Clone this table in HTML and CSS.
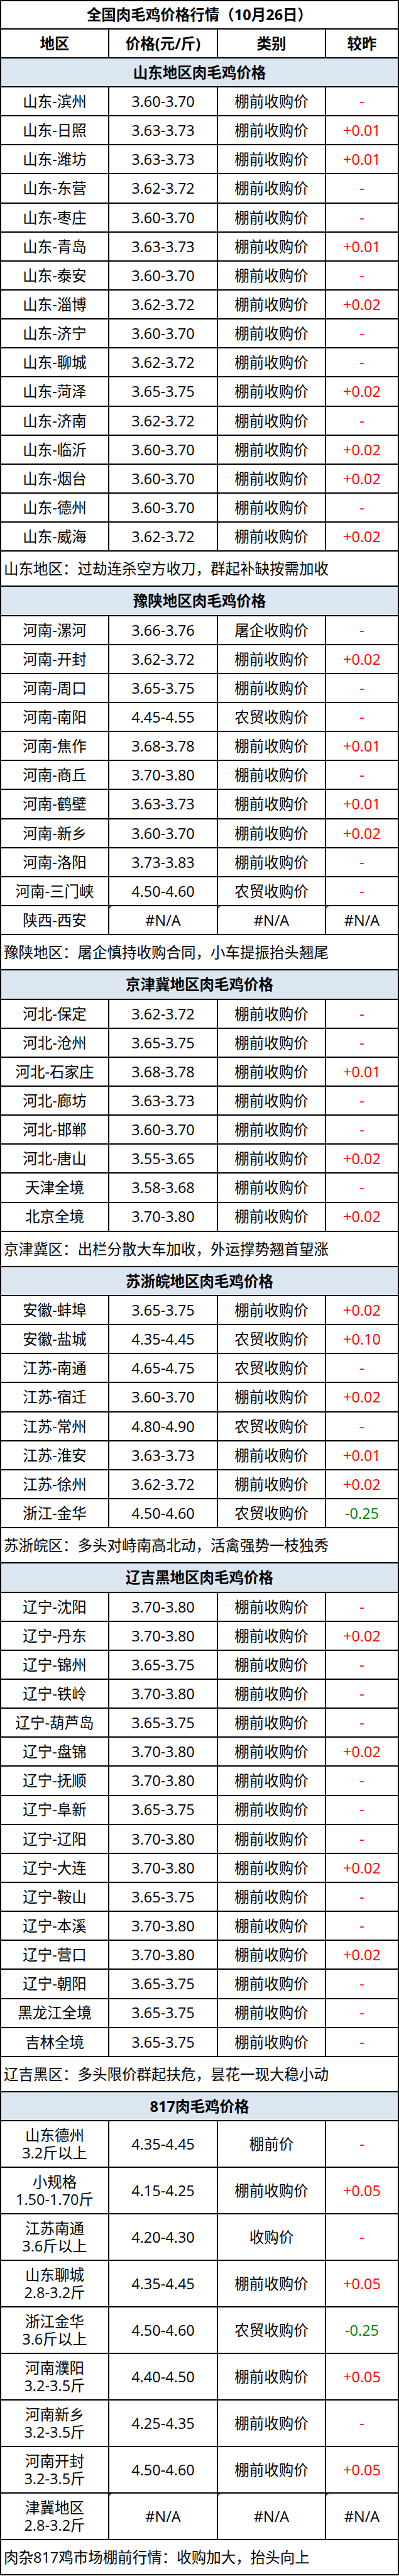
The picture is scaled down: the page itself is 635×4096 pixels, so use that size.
FILE: index.html
```html
<!DOCTYPE html>
<html lang="zh-CN">
<head>
<meta charset="utf-8">
<title>全国肉毛鸡价格行情</title>
<link rel="stylesheet" href="styles.css">
</head>
<body>
<table class="sheet">
  <colgroup>
    <col class="c1"><col class="c2"><col class="c3"><col class="c4">
  </colgroup>
  <tbody>
    <tr class="title"><td colspan="4">全国肉毛鸡价格行情（10月26日）</td></tr>
    <tr class="head"><td>地区</td><td>价格(元/斤)</td><td>类别</td><td>较昨</td></tr>

    <tr class="section"><td colspan="4">山东地区肉毛鸡价格</td></tr>
    <tr class="row"><td>山东-滨州</td><td>3.60-3.70</td><td>棚前收购价</td><td class="up">-</td></tr>
    <tr class="row"><td>山东-日照</td><td>3.63-3.73</td><td>棚前收购价</td><td class="up">+0.01</td></tr>
    <tr class="row"><td>山东-潍坊</td><td>3.63-3.73</td><td>棚前收购价</td><td class="up">+0.01</td></tr>
    <tr class="row"><td>山东-东营</td><td>3.62-3.72</td><td>棚前收购价</td><td class="up">-</td></tr>
    <tr class="row"><td>山东-枣庄</td><td>3.60-3.70</td><td>棚前收购价</td><td class="up">-</td></tr>
    <tr class="row"><td>山东-青岛</td><td>3.63-3.73</td><td>棚前收购价</td><td class="up">+0.01</td></tr>
    <tr class="row"><td>山东-泰安</td><td>3.60-3.70</td><td>棚前收购价</td><td class="up">-</td></tr>
    <tr class="row"><td>山东-淄博</td><td>3.62-3.72</td><td>棚前收购价</td><td class="up">+0.02</td></tr>
    <tr class="row"><td>山东-济宁</td><td>3.60-3.70</td><td>棚前收购价</td><td class="up">-</td></tr>
    <tr class="row"><td>山东-聊城</td><td>3.62-3.72</td><td>棚前收购价</td><td class="up">-</td></tr>
    <tr class="row"><td>山东-菏泽</td><td>3.65-3.75</td><td>棚前收购价</td><td class="up">+0.02</td></tr>
    <tr class="row"><td>山东-济南</td><td>3.62-3.72</td><td>棚前收购价</td><td class="up">-</td></tr>
    <tr class="row"><td>山东-临沂</td><td>3.60-3.70</td><td>棚前收购价</td><td class="up">+0.02</td></tr>
    <tr class="row"><td>山东-烟台</td><td>3.60-3.70</td><td>棚前收购价</td><td class="up">+0.02</td></tr>
    <tr class="row"><td>山东-德州</td><td>3.60-3.70</td><td>棚前收购价</td><td class="up">-</td></tr>
    <tr class="row"><td>山东-威海</td><td>3.62-3.72</td><td>棚前收购价</td><td class="up">+0.02</td></tr>
    <tr class="note"><td colspan="4">山东地区：过劫连杀空方收刀，群起补缺按需加收</td></tr>

    <tr class="section"><td colspan="4">豫陕地区肉毛鸡价格</td></tr>
    <tr class="row"><td>河南-漯河</td><td>3.66-3.76</td><td>屠企收购价</td><td class="up">-</td></tr>
    <tr class="row"><td>河南-开封</td><td>3.62-3.72</td><td>棚前收购价</td><td class="up">+0.02</td></tr>
    <tr class="row"><td>河南-周口</td><td>3.65-3.75</td><td>棚前收购价</td><td class="up">-</td></tr>
    <tr class="row"><td>河南-南阳</td><td>4.45-4.55</td><td>农贸收购价</td><td class="up">-</td></tr>
    <tr class="row"><td>河南-焦作</td><td>3.68-3.78</td><td>棚前收购价</td><td class="up">+0.01</td></tr>
    <tr class="row"><td>河南-商丘</td><td>3.70-3.80</td><td>棚前收购价</td><td class="up">-</td></tr>
    <tr class="row"><td>河南-鹤壁</td><td>3.63-3.73</td><td>棚前收购价</td><td class="up">+0.01</td></tr>
    <tr class="row"><td>河南-新乡</td><td>3.60-3.70</td><td>棚前收购价</td><td class="up">+0.02</td></tr>
    <tr class="row"><td>河南-洛阳</td><td>3.73-3.83</td><td>棚前收购价</td><td class="up">-</td></tr>
    <tr class="row"><td>河南-三门峡</td><td>4.50-4.60</td><td>农贸收购价</td><td class="up">-</td></tr>
    <tr class="row"><td>陕西-西安</td><td class="err">#N/A</td><td class="err">#N/A</td><td class="err">#N/A</td></tr>
    <tr class="note"><td colspan="4">豫陕地区：屠企慎持收购合同，小车提振抬头翘尾</td></tr>

    <tr class="section"><td colspan="4">京津冀地区肉毛鸡价格</td></tr>
    <tr class="row"><td>河北-保定</td><td>3.62-3.72</td><td>棚前收购价</td><td class="up">-</td></tr>
    <tr class="row"><td>河北-沧州</td><td>3.65-3.75</td><td>棚前收购价</td><td class="up">-</td></tr>
    <tr class="row"><td>河北-石家庄</td><td>3.68-3.78</td><td>棚前收购价</td><td class="up">+0.01</td></tr>
    <tr class="row"><td>河北-廊坊</td><td>3.63-3.73</td><td>棚前收购价</td><td class="up">-</td></tr>
    <tr class="row"><td>河北-邯郸</td><td>3.60-3.70</td><td>棚前收购价</td><td class="up">-</td></tr>
    <tr class="row"><td>河北-唐山</td><td>3.55-3.65</td><td>棚前收购价</td><td class="up">+0.02</td></tr>
    <tr class="row"><td>天津全境</td><td>3.58-3.68</td><td>棚前收购价</td><td class="up">-</td></tr>
    <tr class="row"><td>北京全境</td><td>3.70-3.80</td><td>棚前收购价</td><td class="up">+0.02</td></tr>
    <tr class="note"><td colspan="4">京津冀区：出栏分散大车加收，外运撑势翘首望涨</td></tr>

    <tr class="section"><td colspan="4">苏浙皖地区肉毛鸡价格</td></tr>
    <tr class="row"><td>安徽-蚌埠</td><td>3.65-3.75</td><td>棚前收购价</td><td class="up">+0.02</td></tr>
    <tr class="row"><td>安徽-盐城</td><td>4.35-4.45</td><td>农贸收购价</td><td class="up">+0.10</td></tr>
    <tr class="row"><td>江苏-南通</td><td>4.65-4.75</td><td>农贸收购价</td><td class="up">-</td></tr>
    <tr class="row"><td>江苏-宿迁</td><td>3.60-3.70</td><td>棚前收购价</td><td class="up">+0.02</td></tr>
    <tr class="row"><td>江苏-常州</td><td>4.80-4.90</td><td>农贸收购价</td><td class="up">-</td></tr>
    <tr class="row"><td>江苏-淮安</td><td>3.63-3.73</td><td>棚前收购价</td><td class="up">+0.01</td></tr>
    <tr class="row"><td>江苏-徐州</td><td>3.62-3.72</td><td>棚前收购价</td><td class="up">+0.02</td></tr>
    <tr class="row"><td>浙江-金华</td><td>4.50-4.60</td><td>农贸收购价</td><td class="down">-0.25</td></tr>
    <tr class="note"><td colspan="4">苏浙皖区：多头对峙南高北动，活禽强势一枝独秀</td></tr>

    <tr class="section"><td colspan="4">辽吉黑地区肉毛鸡价格</td></tr>
    <tr class="row"><td>辽宁-沈阳</td><td>3.70-3.80</td><td>棚前收购价</td><td class="up">-</td></tr>
    <tr class="row"><td>辽宁-丹东</td><td>3.70-3.80</td><td>棚前收购价</td><td class="up">+0.02</td></tr>
    <tr class="row"><td>辽宁-锦州</td><td>3.65-3.75</td><td>棚前收购价</td><td class="up">-</td></tr>
    <tr class="row"><td>辽宁-铁岭</td><td>3.70-3.80</td><td>棚前收购价</td><td class="up">-</td></tr>
    <tr class="row"><td>辽宁-葫芦岛</td><td>3.65-3.75</td><td>棚前收购价</td><td class="up">-</td></tr>
    <tr class="row"><td>辽宁-盘锦</td><td>3.70-3.80</td><td>棚前收购价</td><td class="up">+0.02</td></tr>
    <tr class="row"><td>辽宁-抚顺</td><td>3.70-3.80</td><td>棚前收购价</td><td class="up">-</td></tr>
    <tr class="row"><td>辽宁-阜新</td><td>3.65-3.75</td><td>棚前收购价</td><td class="up">-</td></tr>
    <tr class="row"><td>辽宁-辽阳</td><td>3.70-3.80</td><td>棚前收购价</td><td class="up">-</td></tr>
    <tr class="row"><td>辽宁-大连</td><td>3.70-3.80</td><td>棚前收购价</td><td class="up">+0.02</td></tr>
    <tr class="row"><td>辽宁-鞍山</td><td>3.65-3.75</td><td>棚前收购价</td><td class="up">-</td></tr>
    <tr class="row"><td>辽宁-本溪</td><td>3.70-3.80</td><td>棚前收购价</td><td class="up">-</td></tr>
    <tr class="row"><td>辽宁-营口</td><td>3.70-3.80</td><td>棚前收购价</td><td class="up">+0.02</td></tr>
    <tr class="row"><td>辽宁-朝阳</td><td>3.65-3.75</td><td>棚前收购价</td><td class="up">-</td></tr>
    <tr class="row"><td>黑龙江全境</td><td>3.65-3.75</td><td>棚前收购价</td><td class="up">-</td></tr>
    <tr class="row"><td>吉林全境</td><td>3.65-3.75</td><td>棚前收购价</td><td class="up">-</td></tr>
    <tr class="note"><td colspan="4">辽吉黑区：多头限价群起扶危，昙花一现大稳小动</td></tr>

    <tr class="section"><td colspan="4">817肉毛鸡价格</td></tr>
    <tr class="tall"><td class="two">山东德州<br>3.2斤以上</td><td>4.35-4.45</td><td>棚前价</td><td class="up">-</td></tr>
    <tr class="tall"><td class="two">小规格<br>1.50-1.70斤</td><td>4.15-4.25</td><td>棚前收购价</td><td class="up">+0.05</td></tr>
    <tr class="tall"><td class="two">江苏南通<br>3.6斤以上</td><td>4.20-4.30</td><td>收购价</td><td class="up">-</td></tr>
    <tr class="tall"><td class="two">山东聊城<br>2.8-3.2斤</td><td>4.35-4.45</td><td>棚前收购价</td><td class="up">+0.05</td></tr>
    <tr class="tall"><td class="two">浙江金华<br>3.6斤以上</td><td>4.50-4.60</td><td>农贸收购价</td><td class="down">-0.25</td></tr>
    <tr class="tall"><td class="two">河南濮阳<br>3.2-3.5斤</td><td>4.40-4.50</td><td>棚前收购价</td><td class="up">+0.05</td></tr>
    <tr class="tall"><td class="two">河南新乡<br>3.2-3.5斤</td><td>4.25-4.35</td><td>棚前收购价</td><td class="up">-</td></tr>
    <tr class="tall"><td class="two">河南开封<br>3.2-3.5斤</td><td>4.50-4.60</td><td>棚前收购价</td><td class="up">+0.05</td></tr>
    <tr class="tall"><td class="two">津冀地区<br>2.8-3.2斤</td><td class="err">#N/A</td><td class="err">#N/A</td><td class="err">#N/A</td></tr>
    <tr class="note"><td colspan="4">肉杂817鸡市场棚前行情：收购加大，抬头向上</td></tr>
  </tbody>
</table>
</body>
</html>
```

FILE: styles.css
```css
html, body {
  margin: 0;
  padding: 0;
  background: #ffffff;
}

body {
  font-family: "Open Sans", "Noto Sans CJK SC", sans-serif;
  color: #000000;
}

.sheet {
  width: 635px;
  border-collapse: separate;
  border-spacing: 0;
  table-layout: fixed;
  border-top: 2px solid #000;
  border-left: 2px solid #000;
  font-size: 23.5px;
}

.c1 { width: 172px; }
.c2 { width: 173px; }
.c3 { width: 172px; }
.c4 { width: 116px; }

.sheet td {
  border-right: 2px solid #000;
  border-bottom: 2px solid #000;
  padding: 0;
  text-align: center;
  vertical-align: middle;
  line-height: 1.2;
  white-space: nowrap;
  position: relative;
}

.title { height: 44.5px; }
.title td { font-weight: 700; }

.head { height: 46.3px; }
.head td { font-weight: 700; }

.section { height: 46.2px; }
.section td {
  background: #dce6f1;
  font-weight: 700;
}

.row { height: 46.15px; }

.note { height: 56.2px; }
.note td {
  text-align: left;
  padding-left: 4px;
}

.tall { height: 74px; }
.two { line-height: 31.4px; }

.up { color: #ff0000; }
.down { color: #008000; }

.err::before {
  content: "";
  position: absolute;
  top: 0;
  left: 0;
  border-top: 4px solid #1e9a1e;
  border-right: 4px solid transparent;
}
```
